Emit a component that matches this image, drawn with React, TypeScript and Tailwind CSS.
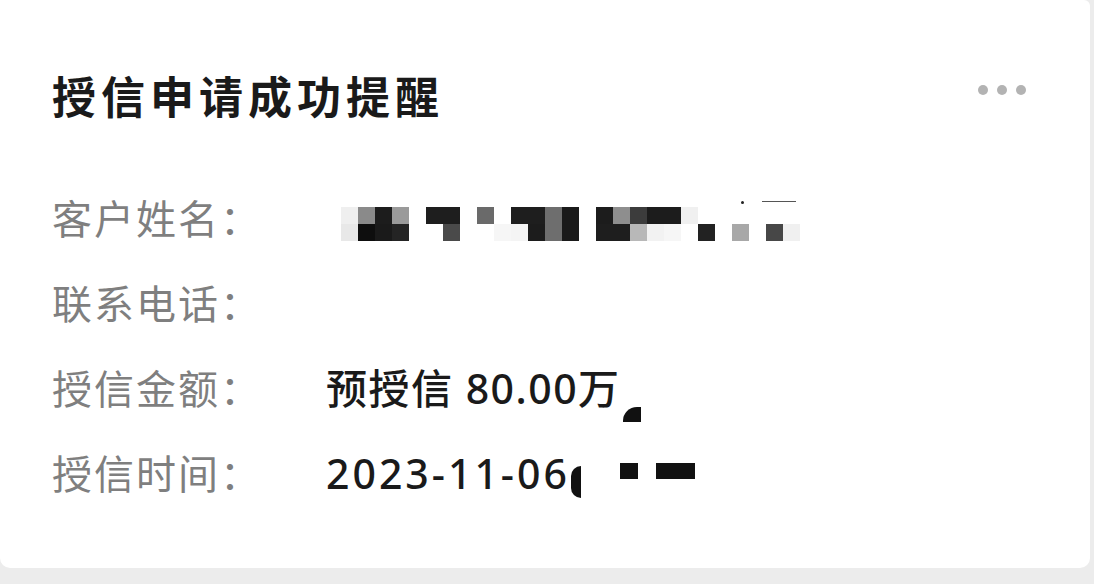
const row1 = [
  "#efefef", "#8a8a8a", "#1c1c1c", "#9a9a9a", "#ffffff", "#1e1e1e", "#1e1e1e", "#ffffff", "#6a6a6a",
  "#ffffff", "#1e1e1e", "#1e1e1e", "#6e6e6e", "#1a1a1a", "#ffffff", "#1c1c1c", "#8e8e8e", "#3c3c3c",
  "#1c1c1c", "#1c1c1c", "#f0f0f0", "#ffffff", "#ffffff", "#ffffff", "#ffffff", "#ffffff", "#ffffff",
];
const row2 = [
  "#e8e8e8", "#0e0e0e", "#1a1a1a", "#242424", "#ffffff", "#ffffff", "#4a4a4a", "#ffffff", "#ffffff",
  "#f6f6f6", "#f4f4f4", "#1c1c1c", "#6e6e6e", "#1a1a1a", "#ffffff", "#1e1e1e", "#1e1e1e", "#b8b8b8",
  "#f2f2f2", "#f6f6f6", "#ffffff", "#222222", "#ffffff", "#a8a8a8", "#ffffff", "#474747", "#f0f0f0",
];

function Mosaic() {
  return (
    <div className="relative ml-[15px] mt-[10px]">
      <div className="grid grid-cols-[repeat(27,17px)] grid-rows-[17px_17px]">
        {[...row1, ...row2].map((c, i) => (
          <div key={i} style={{ backgroundColor: c }} />
        ))}
      </div>
      <div className="absolute left-[400px] top-[-6px] h-[3px] w-[3px] rounded-full bg-[#222]" />
      <div className="absolute left-[421px] top-[-6px] h-px w-[34px] bg-[#555]" />
    </div>
  );
}

function Row({ label, children }: { label: string; children?: React.ReactNode }) {
  return (
    <div className="flex h-[85px] items-center">
      <div className="w-[274px] shrink-0 text-[40px] leading-none tracking-[2px] text-[#7f7f7f]">{label}</div>
      <div className="flex items-center text-[41px] font-medium leading-none text-[#1a1a1a]">{children}</div>
    </div>
  );
}

export default function App() {
  return (
    <div
      className="h-[584px] w-[1094px] overflow-hidden bg-[#ececec]"
      style={{ fontFamily: '"Noto Sans", "Noto Sans CJK SC", sans-serif' }}
    >
      <div className="h-[568px] w-[1090px] rounded-b-[10px] rounded-tr-[6px] bg-white pl-[52px] pr-[64px] pt-[67px]">
        <div className="mb-[53px] flex h-[56px] items-center justify-between">
          <h1
            className="text-[44px] font-bold leading-none tracking-[5px] text-[#1a1a1a]"
            style={{ fontFamily: '"Noto Sans CJK SC", sans-serif' }}
          >
            授信申请成功提醒
          </h1>
          <div className="mt-[-10px] flex gap-[9px]">
            <span className="h-[10px] w-[10px] rounded-full bg-[#b3b3b3]" />
            <span className="h-[10px] w-[10px] rounded-full bg-[#b3b3b3]" />
            <span className="h-[10px] w-[10px] rounded-full bg-[#b3b3b3]" />
          </div>
        </div>
        <Row label="客户姓名：">
          <Mosaic />
        </Row>
        <Row label="联系电话：" />
        <Row label="授信金额：">
          <span className="tracking-[1.5px]">预授信 80.00万</span>
          <span className="ml-[2px] h-[15px] w-[18px] translate-y-[26px] rounded-tl-[14px] bg-[#111]" />
        </Row>
        <Row label="授信时间：">
          <span className="tracking-[3px]">2023-11-06</span>
          <span className="ml-[1px] h-[32px] w-[10px] translate-y-[8px] rounded-l-full bg-[#111]" />
          <span className="ml-[39px] h-[16px] w-[18px] -translate-y-[3px] bg-[#111]" />
          <span className="ml-[18px] h-[16px] w-[39px] -translate-y-[3px] bg-[#111]" />
        </Row>
      </div>
    </div>
  );
}
